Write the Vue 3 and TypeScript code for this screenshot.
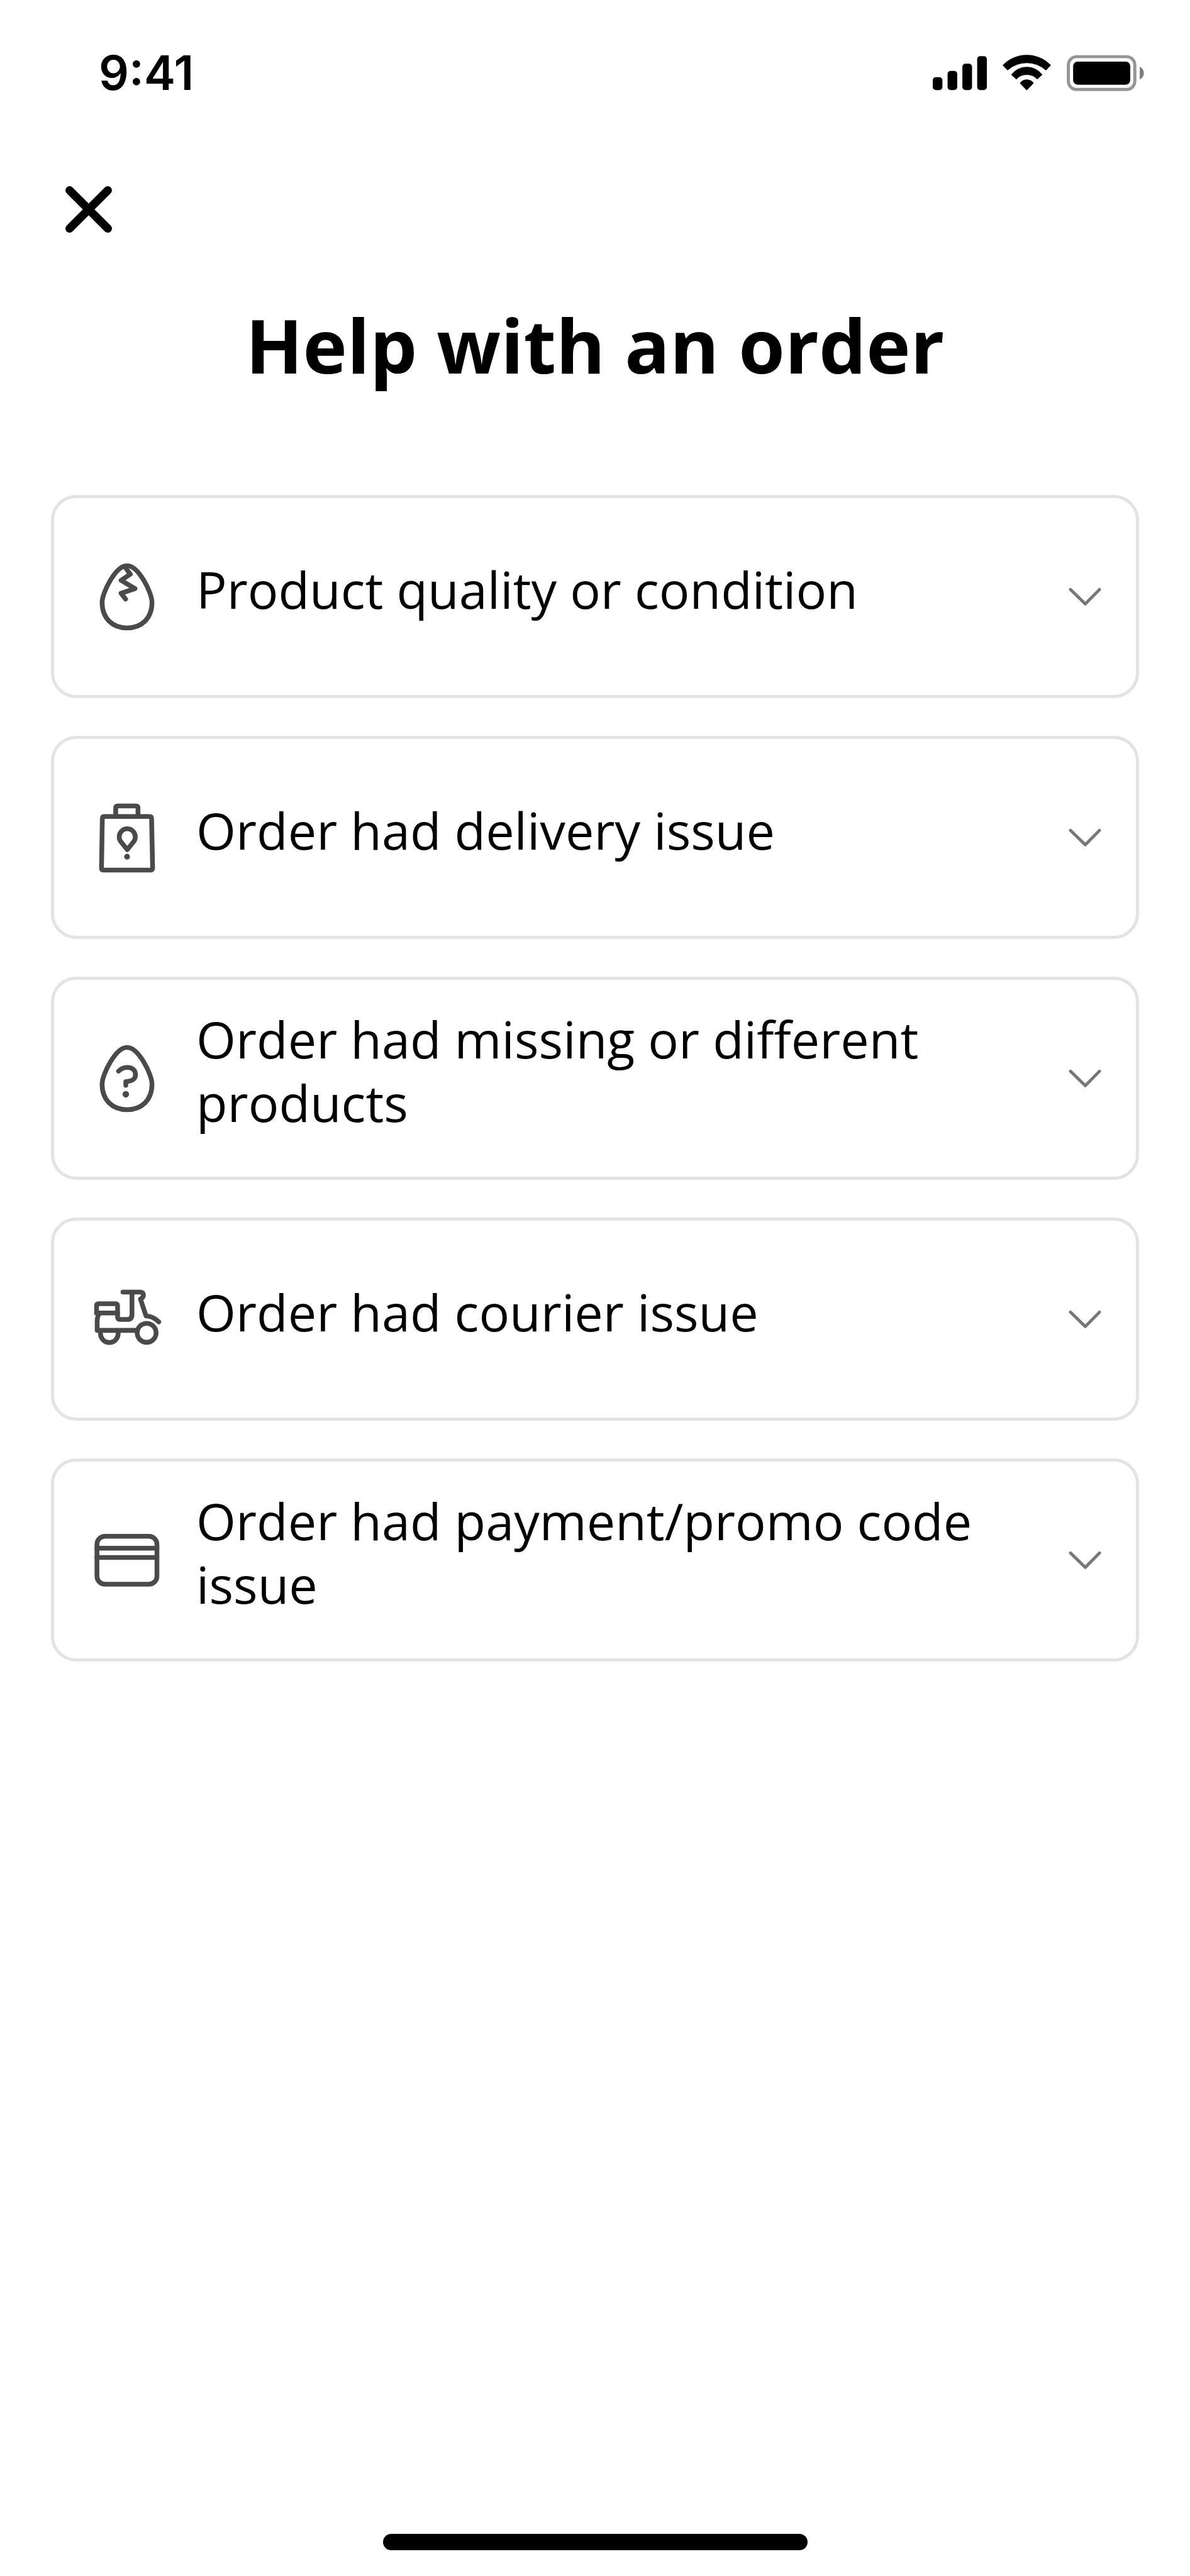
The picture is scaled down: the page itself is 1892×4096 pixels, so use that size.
<script setup lang="ts">
import { ref } from 'vue'

type IconName = 'cracked-egg' | 'bag' | 'question-egg' | 'scooter' | 'card'

interface Topic {
  icon: IconName
  label: string
}

const topics: Topic[] = [
  { icon: 'cracked-egg', label: 'Product quality or condition' },
  { icon: 'bag', label: 'Order had delivery issue' },
  { icon: 'question-egg', label: 'Order had missing or different products' },
  { icon: 'scooter', label: 'Order had courier issue' },
  { icon: 'card', label: 'Order had payment/promo code issue' },
]

const selected = ref<IconName | null>(null)

function toggle(icon: IconName): void {
  selected.value = selected.value === icon ? null : icon
}
</script>

<template>
  <div class="screen">
    <header class="status">
      <span class="time">9:41</span>
      <div class="indicators">
        <svg class="signal" viewBox="0 0 263 176" aria-hidden="true">
          <rect x="0" y="109" width="47" height="62" rx="15" />
          <rect x="72" y="78" width="47" height="93" rx="15" />
          <rect x="144" y="43" width="47" height="128" rx="15" />
          <rect x="216" y="6" width="47" height="165" rx="15" />
        </svg>
        <svg class="wifi" viewBox="0 0 233 176" aria-hidden="true">
          <path d="M0 51A160 160 0 0 1 233 51L209 76A137 137 0 0 0 24 76Z" />
          <path d="M41 96A95 95 0 0 1 192 96L167 119A69 69 0 0 0 66 119Z" />
          <path d="M83 137A40 40 0 0 1 150 137L116 172Z" />
        </svg>
        <svg class="battery" viewBox="0 0 375 176" aria-hidden="true">
          <rect x="8" y="9" width="322" height="159" rx="40" fill="none" stroke="#959595" stroke-width="15" />
          <rect x="31" y="33" width="277" height="112" rx="22" />
          <path d="M354 58Q374 68 374 89Q374 110 354 120Z" fill="#7c7c7c" />
        </svg>
      </div>
    </header>

    <button class="close" type="button" aria-label="Close">
      <svg viewBox="0 0 224 224" aria-hidden="true">
        <path d="M20 20L204 204M204 20L20 204" />
      </svg>
    </button>

    <main>
      <h1>Help with an order</h1>
      <ul class="topics">
        <li v-for="topic in topics" :key="topic.icon">
          <button
            class="topic"
            type="button"
            :aria-expanded="selected === topic.icon"
            @click="toggle(topic.icon)"
          >
            <svg class="icon" viewBox="0 0 360 360" aria-hidden="true">
              <template v-if="topic.icon === 'cracked-egg'">
                <path d="M180 29C236 29 301 160 301 207C301 285 250 331 180 331C110 331 59 285 59 207C59 160 124 29 180 29Z" />
                <path d="M172 38L196 70L151 100L219 140L151 163L173 191" />
              </template>
              <template v-else-if="topic.icon === 'bag'">
                <path d="M70 77H289Q299 77 299 87L304 327Q304 337 294 337H66Q56 337 56 327L60 87Q60 77 70 77Z" />
                <path d="M125 77V36Q125 26 135 26H223Q233 26 233 36V77" />
                <path d="M181 238L149 198A39 39 0 1 1 213 198Z" />
                <circle class="dot" cx="180" cy="272" r="14" />
              </template>
              <template v-else-if="topic.icon === 'question-egg'">
                <path d="M180 29C236 29 301 160 301 207C301 285 250 331 180 331C110 331 59 285 59 207C59 160 124 29 180 29Z" />
                <path d="M139 144C152 131 165 126 181 126C205 126 221 139 221 161C221 184 205 192 174 195V213" />
                <circle class="dot" cx="174" cy="256" r="16" />
              </template>
              <template v-else-if="topic.icon === 'scooter'">
                <path d="M32 149V114Q32 104 42 104H124Q134 104 134 114V168Q134 180 146 180H180Q204 180 204 156V47" />
                <path d="M32 149H134M46 151C37 163 35 175 35 190V233H225" />
                <path d="M160 47H244C263 47 266 70 245 81L272 163C295 163 318 176 334 192" />
                <path d="M51 235V249A43 43 0 0 0 137 249V235" />
                <circle cx="275" cy="245" r="46" />
              </template>
              <template v-else>
                <rect x="34" y="63" width="291" height="233" rx="39" />
                <path d="M34 121H325M34 166H325" />
              </template>
            </svg>
            <span class="label">{{ topic.label }}</span>
            <svg class="chevron" viewBox="0 0 183 183" aria-hidden="true">
              <path d="M21 56L93 126L162 56" />
            </svg>
          </button>
        </li>
      </ul>
    </main>

    <div class="home-bar"></div>
  </div>
</template>

<style>
body {
  margin: 0;
  background: #fff;
}
</style>

<style scoped>
.screen {
  box-sizing: border-box;
  min-height: 100vh;
  display: flex;
  flex-direction: column;
  padding: 72px 0 41px;
  background: #fff;
  color: #000;
  font-family: 'Open Sans', 'Noto Sans', sans-serif;
}

.status {
  display: flex;
  align-items: center;
  justify-content: space-between;
  padding: 0 73px 0 157px;
}

.time {
  font-family: Inter, 'Liberation Sans', sans-serif;
  font-size: 75px;
  font-weight: 600;
  line-height: 88px;
}

.indicators {
  display: flex;
  align-items: center;
  gap: 25px;
}

.indicators svg {
  display: block;
  height: 58px;
}

.signal {
  width: 86px;
}

.wifi {
  width: 77px;
}

.battery {
  width: 123px;
}

.close {
  align-self: flex-start;
  margin: 136px 0 0 104px;
  padding: 0;
  border: 0;
  background: none;
  cursor: pointer;
}

.close svg {
  display: block;
  width: 74px;
  height: 74px;
  fill: none;
  stroke: #000;
  stroke-width: 40;
  stroke-linecap: round;
}

main {
  padding: 108px 81px 60px;
}

h1 {
  margin: 0;
  font-size: 119px;
  font-weight: 700;
  line-height: 140px;
  text-align: center;
}

.topics {
  display: flex;
  flex-direction: column;
  gap: 60px;
  margin: 169px 0 0;
  padding: 0;
  list-style: none;
}

.topic {
  box-sizing: border-box;
  display: flex;
  align-items: center;
  gap: 51px;
  width: 100%;
  min-height: 323px;
  padding: 30px 51px 30px 57px;
  border: 5px solid #e3e3e3;
  border-radius: 40px;
  background: #fff;
  color: inherit;
  font-family: inherit;
  font-size: 81px;
  line-height: 101px;
  text-align: left;
  cursor: pointer;
}

.icon {
  flex: none;
  width: 118px;
  height: 118px;
  fill: none;
  stroke: #4a4a4a;
  stroke-width: 23;
  stroke-linecap: round;
  stroke-linejoin: round;
}

.icon .dot {
  fill: #4a4a4a;
  stroke: none;
}

.label {
  flex: 1;
  padding-bottom: 25px;
}

.chevron {
  flex: none;
  width: 60px;
  height: 60px;
  fill: none;
  stroke: #777;
  stroke-width: 15;
  stroke-linecap: round;
  stroke-linejoin: round;
}

.home-bar {
  align-self: center;
  width: 675px;
  max-width: 60%;
  height: 26px;
  margin-top: auto;
  border-radius: 13px;
  background: #000;
}
</style>
